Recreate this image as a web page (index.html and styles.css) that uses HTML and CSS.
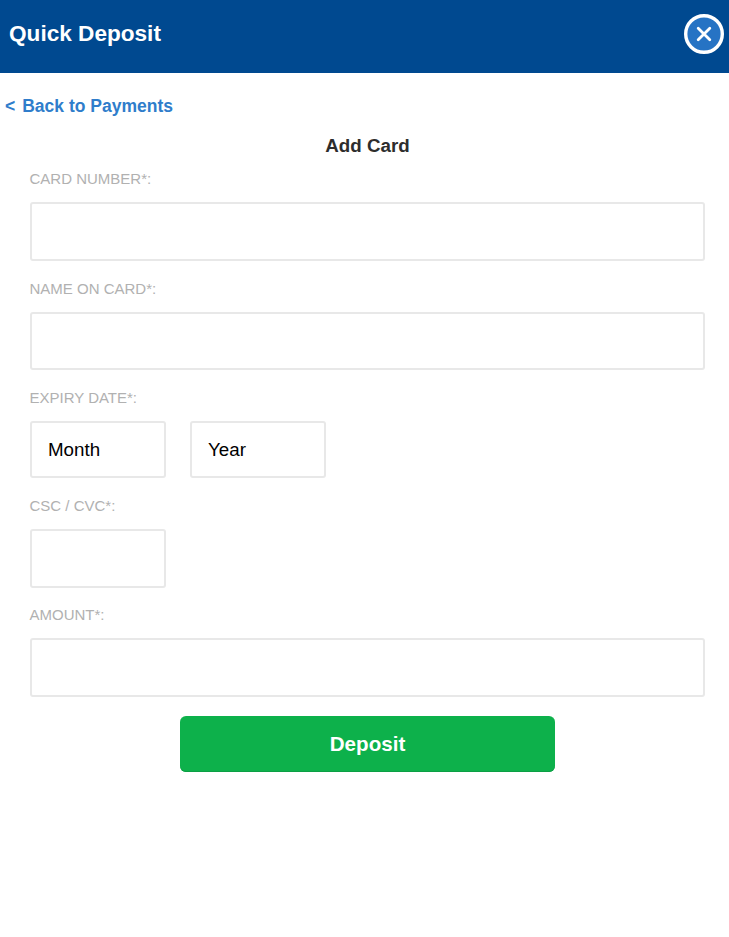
FILE: index.html
```
<!DOCTYPE html>
<html lang="en">

<head>
  <meta charset="utf-8">
  <meta name="viewport" content="width=device-width">
  <title>Quick Deposit</title>
  <link rel="stylesheet" href="styles.css">
</head>

<body>
  <header class="header">
    <h1>Quick Deposit</h1>
    <button class="close" type="button" aria-label="Close">
      <svg width="40" height="40" viewBox="0 0 40 40">
        <circle cx="20" cy="20" r="18.3" />
        <path d="M14.2 14.2L25.8 25.8M25.8 14.2L14.2 25.8" />
      </svg>
    </button>
  </header>
  <a class="back" href="#"><span>&lt;</span>Back to Payments</a>
  <form class="form">
    <h2>Add Card</h2>
    <div class="field">
      <label for="number">CARD NUMBER*:</label>
      <input id="number" type="text">
    </div>
    <div class="field">
      <label for="name">NAME ON CARD*:</label>
      <input id="name" class="name" type="text">
    </div>
    <div class="field">
      <label for="month">EXPIRY DATE*:</label>
      <div class="expiry">
        <select id="month">
          <option>Month</option>
        </select>
        <select id="year" aria-label="Year">
          <option>Year</option>
        </select>
      </div>
    </div>
    <div class="field">
      <label for="csc">CSC / CVC*:</label>
      <input id="csc" class="short" type="text">
    </div>
    <div class="field amount">
      <label for="amount">AMOUNT*:</label>
      <input id="amount" type="text">
    </div>
    <button class="deposit" type="button">Deposit</button>
  </form>
</body>

</html>
```

FILE: styles.css
```
* {
  box-sizing: border-box;
}

body {
  margin: 0;
  background-color: #fff;
  font-family: "Liberation Sans", Arial, sans-serif;
}

/* header */
.header {
  display: flex;
  justify-content: space-between;
  align-items: flex-start;
  height: 73px;
  padding: 14px 5px 0 9px;
  background-color: #004990;
}

.header h1 {
  margin: 6px 0 0;
  font-size: 22.6px;
  line-height: 27px;
  color: #fff;
}

.close {
  width: 40px;
  height: 40px;
  padding: 0;
  border: 0;
  background: none;
}

.close svg {
  display: block;
}

.close circle {
  fill: #2673c4;
  stroke: #fff;
  stroke-width: 3.4;
}

.close path {
  stroke: #fff;
  stroke-width: 2.8;
  stroke-linecap: round;
}

.back {
  display: block;
  width: max-content;
  margin: 22px 0 0 5px;
  font-size: 17.5px;
  font-weight: bold;
  line-height: 22px;
  color: #2f7dcb;
  text-decoration: none;
}

.back span {
  margin-right: 7px;
}

/* form */
.form {
  display: flex;
  flex-direction: column;
  gap: 19px;
  padding: 18px 24px 0 30px;
}

.form h2 {
  margin: 0 0 -6px;
  font-size: 18.75px;
  line-height: 22px;
  text-align: center;
  color: #2d2d2d;
}

.field label {
  display: block;
  margin: 0 0 14px -0.5px;
  font-size: 15px;
  line-height: 18px;
  color: #b1b1b1;
}

.field input,
.field select {
  display: block;
  width: 100%;
  height: 59px;
  padding: 0 16px;
  border: 2px solid #e8e8e8;
  border-radius: 3px;
  background-color: #fff;
  font-family: inherit;
  font-size: 18.75px;
  color: #000;
}

.field .name {
  height: 58px;
}

.field .short {
  width: 136px;
}

.amount {
  margin-top: -1px;
}

.expiry {
  display: flex;
  gap: 24px;
}

.expiry select {
  width: 136px;
  height: 57px;
  -webkit-appearance: none;
  appearance: none;
}

.deposit {
  align-self: center;
  width: 375px;
  height: 56px;
  padding: 0;
  border: 0;
  border-radius: 6px;
  background-color: #0db14b;
  box-shadow: inset 0 -1px 0 #0c9f44;
  font-family: inherit;
  font-size: 20.6px;
  font-weight: bold;
  color: #fff;
}
```
